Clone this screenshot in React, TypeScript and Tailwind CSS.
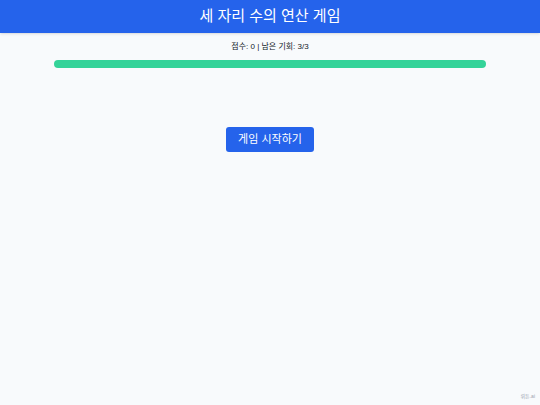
export default function App() {
  return (
    <div
      className="relative flex h-[405px] w-[540px] flex-col bg-[#f8fafc]"
      style={{ fontFamily: '"Liberation Sans", "Noto Sans CJK KR", sans-serif' }}
    >
      <header className="flex h-[33px] items-center justify-center bg-[#2563eb] text-[15px] text-white shadow-sm">
        세 자리 수의 연산 게임
      </header>
      <div className="flex flex-col items-center px-[54px]">
        <p className="mt-[9px] text-[8px] leading-[10px] text-[#111827]">점수: 0 | 남은 기회: 3/3</p>
        <div className="mt-[8px] h-[8px] w-full rounded-full bg-[#34d399]" />
        <button className="mt-[59px] flex h-[25px] w-[88px] items-center justify-center rounded-[3px] bg-[#2563eb] text-[11px] text-white">
          게임 시작하기
        </button>
      </div>
      <span className="absolute bottom-[5px] right-[5px] text-[5px] text-[#9ca3af]">뤼튼.ai</span>
    </div>
  );
}
